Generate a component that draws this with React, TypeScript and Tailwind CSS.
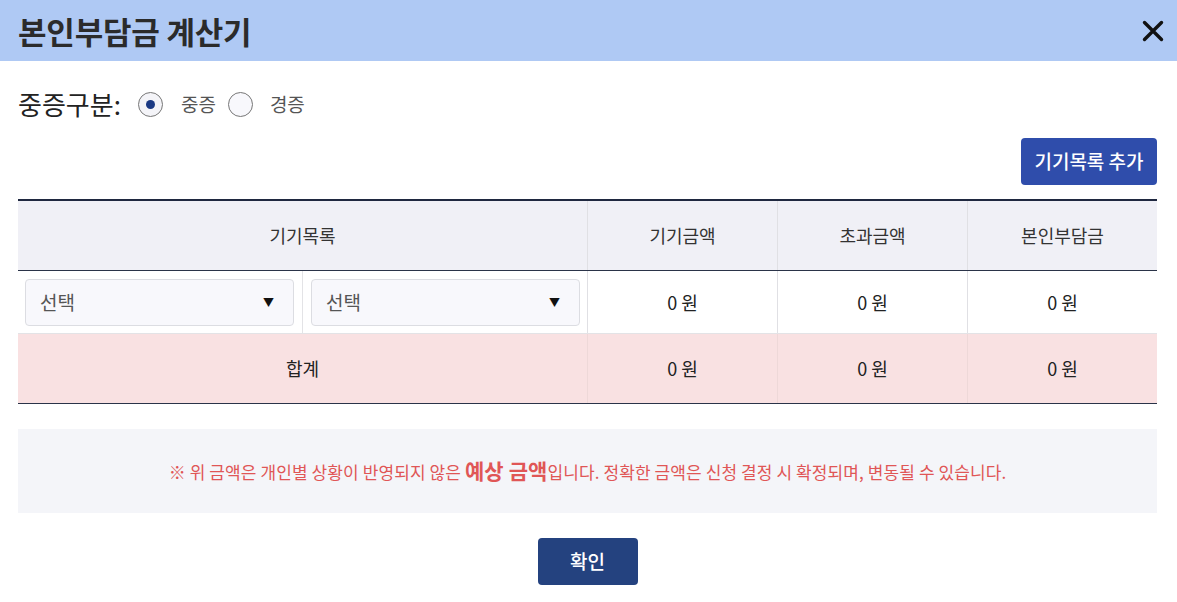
import React from "react";

const font = { fontFamily: '"Noto Sans CJK KR", "Noto Sans", sans-serif' };

function Select() {
  return (
    <div className="flex-1 h-[47px] flex items-center justify-between pl-[14px] pr-[19px] bg-[#f8f8fc] border border-[#dcdde2] rounded-[4px] text-[19px] text-[#555]">
      <span>선택</span>
      <span className="text-[11px] text-[#111]">▼</span>
    </div>
  );
}

export default function App() {
  return (
    <div style={font} className="w-[1177px] h-[602px] bg-white text-[#222] overflow-hidden">
      <div className="h-[61px] bg-[#afc9f4] flex items-center justify-between pl-[18px] pr-[13px]">
        <h1 className="text-[31px] font-bold text-[#2b2b2b] tracking-[-0.2px] leading-none">본인부담금 계산기</h1>
        <svg width="22" height="22" viewBox="0 0 22 22">
          <path d="M2.5 2.5 L19.5 19.5 M19.5 2.5 L2.5 19.5" stroke="#111" strokeWidth="3.4" strokeLinecap="round" />
        </svg>
      </div>
      <div className="pl-[18px] pr-[20px]">
        <div className="flex items-center h-[44px] mt-[21px]">
          <span className="text-[26px] text-[#222] mr-[17px] leading-none">중증구분:</span>
          <span className="w-[25px] h-[25px] rounded-full border border-[#777] bg-[#f4f4f8] flex items-center justify-center">
            <span className="w-[9px] h-[9px] rounded-full bg-[#1b3a84]" />
          </span>
          <span className="text-[19px] text-[#555] ml-[18px] mr-[12px]">중증</span>
          <span className="w-[25px] h-[25px] rounded-full border border-[#777] bg-[#f8f8fc]" />
          <span className="text-[19px] text-[#555] ml-[17px]">경증</span>
        </div>
        <div className="flex justify-end mt-[12px]">
          <button className="w-[136px] h-[47px] bg-[#2f4dab] text-white text-[19px] font-medium rounded-[4px]">기기목록 추가</button>
        </div>
        <div className="mt-[14px] border-t-2 border-[#1f2840]">
          <div className="grid grid-cols-[569px_190px_190px_1fr] h-[70px] bg-[#f0f0f6] border-b border-[#2a3348] text-[18px] text-[#333]">
            <div className="flex items-center justify-center">기기목록</div>
            <div className="flex items-center justify-center border-l border-[#e0e0e4]">기기금액</div>
            <div className="flex items-center justify-center border-l border-[#e0e0e4]">초과금액</div>
            <div className="flex items-center justify-center border-l border-[#e0e0e4]">본인부담금</div>
          </div>
          <div className="grid grid-cols-[569px_190px_190px_1fr] h-[63px] border-b border-[#e3e3e6] text-[18px] text-[#222]">
            <div className="flex items-center">
              <div className="flex-1 flex items-center h-full pl-[7px] pr-[8px] border-r border-[#e3e3e6]"><Select /></div>
              <div className="flex-1 flex items-center h-full pl-[8px] pr-[7px]"><Select /></div>
            </div>
            <div className="flex items-center justify-center border-l border-[#e0e0e4]">0 원</div>
            <div className="flex items-center justify-center border-l border-[#e0e0e4]">0 원</div>
            <div className="flex items-center justify-center border-l border-[#e0e0e4]">0 원</div>
          </div>
          <div className="grid grid-cols-[569px_190px_190px_1fr] h-[70px] bg-[#f9e1e2] border-b border-[#2a3348] text-[18px] text-[#222]">
            <div className="flex items-center justify-center">합계</div>
            <div className="flex items-center justify-center border-l border-[#eed8d8]">0 원</div>
            <div className="flex items-center justify-center border-l border-[#eed8d8]">0 원</div>
            <div className="flex items-center justify-center border-l border-[#eed8d8]">0 원</div>
          </div>
        </div>
        <div className="mt-[25px] h-[84px] bg-[#f4f5f9] flex items-center justify-center text-[17px] tracking-[0.1px] text-[#e05656]">
          <span>※ 위 금액은 개인별 상황이 반영되지 않은 <b className="text-[21px] font-bold">예상 금액</b>입니다. 정확한 금액은 신청 결정 시 확정되며, 변동될 수 있습니다.</span>
        </div>
        <div className="flex justify-center mt-[25px]">
          <button className="w-[100px] h-[47px] bg-[#24427f] text-white text-[19px] font-medium rounded-[4px]">확인</button>
        </div>
      </div>
    </div>
  );
}
